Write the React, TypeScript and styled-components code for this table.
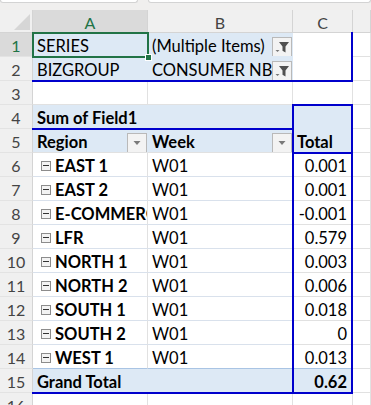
import React from 'react';
import styled, {createGlobalStyle, css} from 'styled-components';

const COLS = '33px 115px 145px 60px 1fr';
const ROWS = '23px repeat(16, 24px)';
const PIVOT = '#dde9f5';
const GRID = '#e1e1e1';
const BLUE = '#0000cc';
const GREEN = '#217346';

const GlobalStyle = createGlobalStyle`
  html, body {
    margin: 0;
    padding: 0;
    background: #fff;
    overflow: hidden;
  }
  body {
    font-family: Lato, "Liberation Sans", sans-serif;
    font-size: 16.5px;
    color: #000;
  }
`;

const TopBar = styled.div`
  height: 10px;
  background: #f0efee;
  display: flex;
  gap: 10px;
`;

const InputBox = styled.div<{ $w?: number }>`
  height: 2px;
  background: #fff;
  border: 1px solid #d3d3d3;
  border-top: none;
  border-radius: 0 0 4px 4px;
  ${p => (p.$w ? css`width: ${p.$w}px;` : css`flex: 1;`)}
`;

const Sheet = styled.div`
  display: grid;
  width: 371px;
  & > * {
    grid-area: 1 / 1;
  }
`;

const Layer = styled.div<{ $over?: boolean }>`
  display: grid;
  grid-template-columns: ${COLS};
  grid-template-rows: ${ROWS};
  ${p => p.$over && css`pointer-events: none;`}
`;

const Corner = styled.div`
  background: #f0f0f0;
  border-right: 1px solid #d4d4d4;
  border-bottom: 1px solid #d4d4d4;
  display: flex;
  align-items: flex-end;
  justify-content: flex-end;
  padding: 0 2px 2px 0;
`;

const ColHead = styled.div<{ $sel?: boolean }>`
  background: ${p => (p.$sel ? '#dadada' : '#f0f0f0')};
  color: ${p => (p.$sel ? GREEN : '#444')};
  border-right: 1px solid #d4d4d4;
  border-bottom: 1px solid #d4d4d4;
  display: flex;
  align-items: center;
  justify-content: center;
  padding-top: 2px;
  font-size: 16px;
`;

const RowHead = styled.div<{ $sel?: boolean }>`
  background: ${p => (p.$sel ? '#dadada' : '#f0f0f0')};
  color: ${p => (p.$sel ? GREEN : '#444')};
  border-right: 1px solid #d4d4d4;
  border-bottom: 1px solid #e3e3e3;
  display: flex;
  align-items: center;
  justify-content: center;
  padding-top: 1px;
  font-size: 16px;
`;

const Cell = styled.div<{
  $bg?: string;
  $line?: string;
  $vline?: string;
  $span?: number;
  $right?: boolean;
  $bold?: boolean;
}>`
  box-sizing: border-box;
  min-width: 0;
  overflow: hidden;
  white-space: nowrap;
  display: flex;
  align-items: center;
  justify-content: ${p => (p.$right ? 'flex-end' : 'flex-start')};
  gap: 4px;
  padding: 2px ${p => (p.$right ? '5px' : '0')} 0 ${p => (p.$right ? '0' : '4px')};
  background: ${p => p.$bg || '#fff'};
  border-right: 1px solid ${p => p.$vline || GRID};
  border-bottom: 1px solid ${p => p.$line || GRID};
  font-weight: ${p => (p.$bold ? 700 : 400)};
  ${p => p.$span && css`grid-column: span ${p.$span};`}
`;

const Label = styled.span`
  flex: 1;
  min-width: 0;
`;

const Collapse = styled.span`
  position: relative;
  flex: none;
  width: 10px;
  height: 10px;
  margin-left: 4px;
  box-sizing: border-box;
  border: 1px solid #8c8c8c;
  background: #f3f3f3;
  &::after {
    content: '';
    position: absolute;
    left: 1px;
    right: 1px;
    top: 3px;
    height: 1px;
    background: #333;
  }
`;

const DropButton = styled.span`
  flex: none;
  align-self: flex-end;
  width: 20px;
  height: 20px;
  margin-bottom: -1px;
  margin-left: -3px;
  box-sizing: border-box;
  border: 1px solid #b9b9b9;
  background: #f3f3f3;
  display: flex;
  align-items: center;
  justify-content: center;
`;

const Frame = styled.div<{ $area: string; $t?: boolean; $r?: boolean; $b?: boolean; $l?: boolean }>`
  grid-area: ${p => p.$area};
  margin: -1px 0 -1px -1px;
  ${p => p.$t && css`border-top: 2px solid ${BLUE};`}
  ${p => p.$r && css`border-right: 2px solid ${BLUE};`}
  ${p => p.$b && css`border-bottom: 2px solid ${BLUE};`}
  ${p => p.$l && css`border-left: 2px solid ${BLUE};`}
`;

const Selection = styled.div`
  grid-area: 2 / 2 / 3 / 3;
  position: relative;
  margin: -1px;
  border: 2px solid ${GREEN};
`;

const Handle = styled.span`
  position: absolute;
  right: -5px;
  bottom: -5px;
  width: 5px;
  height: 5px;
  background: ${GREEN};
  border: 1px solid #fff;
`;

const Triangle = () => (
  <svg width="16" height="16" viewBox="0 0 16 16">
    <polygon points="16,0 16,16 0,16" fill="#d6d6d6" />
  </svg>
);

const Arrow = () => (
  <svg width="10" height="6" viewBox="0 0 10 6">
    <polygon points="1.5,1 8.5,1 5,5" fill="#7a7a7a" />
  </svg>
);

const Funnel = () => (
  <svg width="18" height="18" viewBox="0 0 18 18">
    <polygon points="6,4 16,4 12.5,8.5 12.5,14.5 9.5,12.8 9.5,8.5" fill="#505050" />
    <polygon points="2.5,12 6.5,12 4.5,14" fill="#777" />
  </svg>
);

const regions: [string, string][] = [
  ['EAST 1', '0.001'],
  ['EAST 2', '0.001'],
  ['E-COMMERCE', '-0.001'],
  ['LFR', '0.579'],
  ['NORTH 1', '0.003'],
  ['NORTH 2', '0.006'],
  ['SOUTH 1', '0.018'],
  ['SOUTH 2', '0'],
  ['WEST 1', '0.013'],
];

const DATA_LINE = '#d9e1ec';
const TOTAL_LINE = '#a9c4e4';

export default function App() {
  return (
    <>
      <GlobalStyle />
      <TopBar>
        <InputBox $w={136} />
        <InputBox />
      </TopBar>
      <Sheet>
        <Layer>
          <Corner><Triangle /></Corner>
          <ColHead $sel>A</ColHead>
          <ColHead>B</ColHead>
          <ColHead>C</ColHead>
          <ColHead />

          <RowHead $sel>1</RowHead>
          <Cell $bg={PIVOT} $line={PIVOT} $vline={PIVOT}>SERIES</Cell>
          <Cell $bg={PIVOT} $line={PIVOT} $vline={PIVOT}>
            <Label>(Multiple Items)</Label>
            <DropButton><Funnel /></DropButton>
          </Cell>
          <Cell $line="#fff" />
          <Cell />

          <RowHead>2</RowHead>
          <Cell $bg={PIVOT} $vline={PIVOT}>BIZGROUP</Cell>
          <Cell $bg={PIVOT} $vline={PIVOT}>
            <Label>CONSUMER NB</Label>
            <DropButton><Funnel /></DropButton>
          </Cell>
          <Cell />
          <Cell />

          <RowHead>3</RowHead>
          <Cell />
          <Cell />
          <Cell />
          <Cell />

          <RowHead>4</RowHead>
          <Cell $bg={PIVOT} $span={2} $bold>Sum of Field1</Cell>
          <Cell $bg={PIVOT} $line={PIVOT} />
          <Cell />

          <RowHead>5</RowHead>
          <Cell $bg={PIVOT} $vline={PIVOT} $bold>
            <Label>Region</Label>
            <DropButton><Arrow /></DropButton>
          </Cell>
          <Cell $bg={PIVOT} $vline={PIVOT} $bold>
            <Label>Week</Label>
            <DropButton><Arrow /></DropButton>
          </Cell>
          <Cell $bg={PIVOT} $bold>Total</Cell>
          <Cell />

          {regions.map(([name, value], i) => {
            const last = i === regions.length - 1;
            return (
              <React.Fragment key={name}>
                <RowHead>{i + 6}</RowHead>
                <Cell $bold $line={last ? TOTAL_LINE : DATA_LINE}>
                  <Collapse />
                  <Label>{name}</Label>
                </Cell>
                <Cell $line={last ? TOTAL_LINE : DATA_LINE}>W01</Cell>
                <Cell $right $line={last ? TOTAL_LINE : GRID}>{value}</Cell>
                <Cell />
              </React.Fragment>
            );
          })}

          <RowHead>15</RowHead>
          <Cell $bg={PIVOT} $span={2} $bold>Grand Total</Cell>
          <Cell $bg={PIVOT} $right $bold>0.62</Cell>
          <Cell />

          <RowHead>16</RowHead>
          <Cell />
          <Cell />
          <Cell />
          <Cell />
        </Layer>

        <Layer $over>
          <Frame $area="2 / 2 / 4 / 5" $r $b />
          <Frame $area="5 / 2 / 6 / 4" $b />
          <Frame $area="5 / 4 / 17 / 5" $t $r $b $l />
          <Frame $area="6 / 4 / 7 / 5" $b />
          <Frame $area="16 / 2 / 17 / 5" $b />
          <Selection><Handle /></Selection>
        </Layer>
      </Sheet>
    </>
  );
}
